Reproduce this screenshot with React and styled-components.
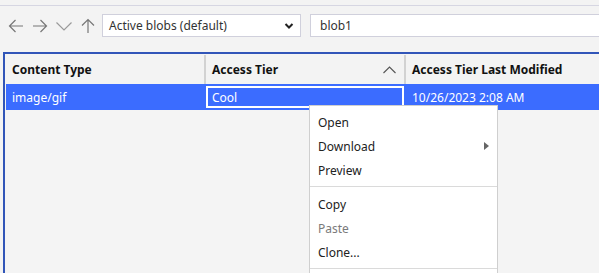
import React from "react";
import styled, { createGlobalStyle } from "styled-components";

const Global = createGlobalStyle`
  html, body { margin: 0; padding: 0; background: #f3f3f3; overflow: hidden; }
  body { font-family: "Noto Sans", "Open Sans", sans-serif; font-size: 12px; color: #222; }
  * { box-sizing: border-box; }
`;

const Page = styled.div`
  width: 599px;
  height: 273px;
  position: relative;
  overflow: hidden;
  display: flex;
  flex-direction: column;
  background: #f3f3f3;
`;

const TopRule = styled.div`
  height: 6px;
  flex-shrink: 0;
  border-bottom: 1px solid #d6d6e2;
`;

const Toolbar = styled.div`
  display: flex;
  align-items: center;
  flex-shrink: 0;
  height: 46px;
  padding: 0 0 7px 8px;
`;

const NavGroup = styled.div`
  display: flex;
  align-items: center;
  gap: 8px;
  margin-right: 6px;
`;

const NavIcon = styled.svg`
  width: 16px;
  height: 16px;
  display: block;
`;

const SelectBox = styled.div`
  width: 199px;
  height: 23px;
  background: #fff;
  border: 1px solid #d0d0dc;
  display: flex;
  align-items: center;
  justify-content: space-between;
  padding: 0 6px;
  color: #333;
  margin-right: 9px;
`;

const Caret = styled.svg`
  width: 10px;
  height: 8px;
  display: block;
`;

const TextBox = styled.div`
  flex: 1;
  height: 23px;
  background: #fff;
  border: 1px solid #d0d0dc;
  border-right: none;
  display: flex;
  align-items: center;
  padding: 0 9px;
  color: #333;
`;

const Grid = styled.div`
  flex: 1;
  min-height: 0;
  margin-left: 3px;
  border: 2px solid #3155b8;
  border-right: none;
  border-bottom: none;
  padding: 1px 0 0 1px;
  background: #f4f4f4;
  overflow: hidden;
`;

const HeaderRow = styled.div`
  display: flex;
  height: 29px;
  background: #f3f3f3;
`;

const HeaderCell = styled.div`
  width: 200px;
  flex: ${(p) => (p.$grow ? "1 0 auto" : "0 0 auto")};
  display: flex;
  align-items: center;
  justify-content: space-between;
  padding: 0 8px 0 6px;
  font-weight: 700;
  color: #111;
  border-right: ${(p) => (p.$grow ? "none" : "2px solid #d2d2d2")};
  white-space: nowrap;
`;

const SortIcon = styled.svg`
  width: 13px;
  height: 8px;
  display: block;
`;

const DataRow = styled.div`
  display: flex;
  height: 26px;
  background: #3b6cff;
  color: #fff;
`;

const DataCell = styled.div`
  width: 200px;
  flex: ${(p) => (p.$grow ? "1 0 auto" : "0 0 auto")};
  display: flex;
  align-items: center;
  padding: 0 6px;
  white-space: nowrap;
`;

const EditCell = styled.div`
  width: 198px;
  flex-shrink: 0;
  margin: 2px 2px 2px 0;
  border: 2px solid #fff;
  display: flex;
  align-items: center;
  padding: 0 4px;
`;

const Menu = styled.div`
  position: absolute;
  left: 309px;
  top: 105px;
  width: 189px;
  background: #fff;
  border: 1px solid #cfcfcf;
  padding-top: 4px;
`;

const Item = styled.div`
  height: 24px;
  display: flex;
  align-items: center;
  justify-content: space-between;
  padding: 0 8px;
  color: ${(p) => (p.$disabled ? "#7a7a7a" : "#222")};
`;

const Separator = styled.div`
  height: 1px;
  background: #dadada;
  margin: 4px 0 5px 0;
`;

const SubArrow = styled.svg`
  width: 5px;
  height: 8px;
  display: block;
`;

export default function App() {
  return (
    <Page>
      <Global />
      <TopRule />
      <Toolbar>
        <NavGroup>
          <NavIcon viewBox="0 0 16 16" fill="none" stroke="#777" strokeWidth="1.2">
            <path d="M15 8H1.5M7.5 2 1.5 8l6 6" />
          </NavIcon>
          <NavIcon viewBox="0 0 16 16" fill="none" stroke="#777" strokeWidth="1.2">
            <path d="M1 8h13.5M8.5 2l6 6-6 6" />
          </NavIcon>
          <NavIcon viewBox="0 0 16 16" fill="none" stroke="#9a9a9a" strokeWidth="1.2">
            <path d="M0.5 4.5 8 12l7.5-7.5" />
          </NavIcon>
          <NavIcon viewBox="0 0 16 16" fill="none" stroke="#777" strokeWidth="1.2">
            <path d="M8 15V1.5M2 7.5l6-6 6 6" />
          </NavIcon>
        </NavGroup>
        <SelectBox>
          <span>Active blobs (default)</span>
          <Caret viewBox="0 0 10 8" fill="none" stroke="#222" strokeWidth="2">
            <path d="M1.5 2 5 5.5 8.5 2" />
          </Caret>
        </SelectBox>
        <TextBox>blob1</TextBox>
      </Toolbar>
      <Grid>
        <HeaderRow>
          <HeaderCell>Content Type</HeaderCell>
          <HeaderCell>
            Access Tier
            <SortIcon viewBox="0 0 13 8" fill="none" stroke="#555" strokeWidth="1.1">
              <path d="M0.5 7 6.5 1l6 6" />
            </SortIcon>
          </HeaderCell>
          <HeaderCell $grow>Access Tier Last Modified</HeaderCell>
        </HeaderRow>
        <DataRow>
          <DataCell>image/gif</DataCell>
          <EditCell>Cool</EditCell>
          <DataCell $grow>10/26/2023 2:08 AM</DataCell>
        </DataRow>
      </Grid>
      <Menu>
        <Item>Open</Item>
        <Item>
          Download
          <SubArrow viewBox="0 0 5 8">
            <path d="M0 0l5 4-5 4z" fill="#666" />
          </SubArrow>
        </Item>
        <Item>Preview</Item>
        <Separator />
        <Item>Copy</Item>
        <Item $disabled>Paste</Item>
        <Item>Clone...</Item>
        <Separator />
      </Menu>
    </Page>
  );
}
